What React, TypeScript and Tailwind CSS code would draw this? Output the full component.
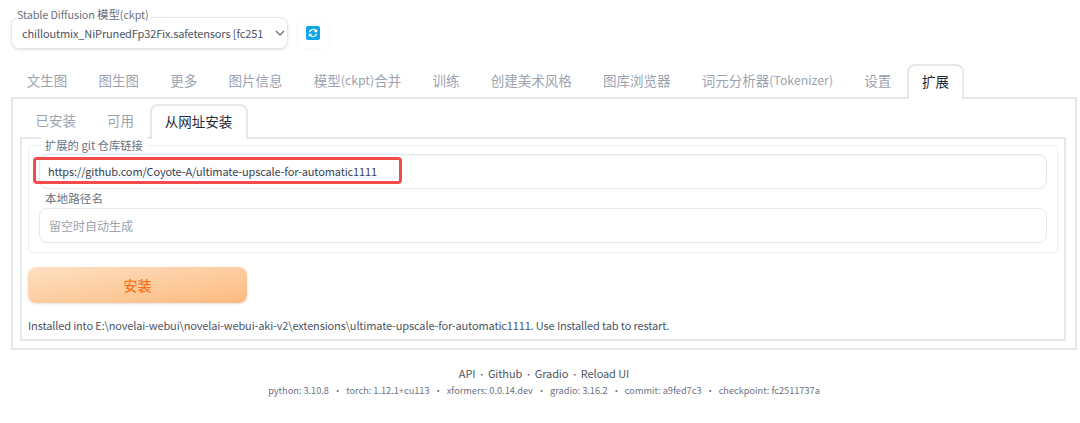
const subTabs = ["已安装", "可用"];
const fontStack = { fontFamily: '"Noto Sans CJK SC", "Noto Sans", sans-serif' };
const versions = ["python: 3.10.8", "torch: 1.12.1+cu113", "xformers: 0.0.14.dev", "gradio: 3.16.2", "commit: a9fed7c3", "checkpoint: fc2511737a"];
const links = ["API", "Github", "Gradio", "Reload UI"];

function Tab({ children }: { children: React.ReactNode }) {
  return <div className="flex h-[33px] items-center whitespace-nowrap px-[15.65px] pb-[1px] text-[13.5px] text-[#9ca3af]">{children}</div>;
}

function RefreshIcon() {
  return (
    <svg width="14" height="14" viewBox="0 0 14 14" className="block">
      <rect width="14" height="14" rx="2" fill="#0ea5e9" />
      <path d="M3.5 6.2A3.6 3.6 0 0 1 9.7 4.6L10.6 5.6M10.6 3.4V5.6H8.4" fill="none" stroke="#fff" strokeWidth="1.3" />
      <path d="M10.5 7.8A3.6 3.6 0 0 1 4.3 9.4L3.4 8.4M3.4 10.6V8.4H5.6" fill="none" stroke="#fff" strokeWidth="1.3" />
    </svg>
  );
}

export default function App() {
  return (
    <main style={fontStack} className="h-[423px] w-[1080px] overflow-hidden bg-white px-[11px] pt-[17px] text-[#374151]">
      <div className="flex gap-2">
        <div className="relative flex h-[32px] w-[277px] shrink-0 items-center justify-between rounded-lg border border-[#e5e7eb] pl-[10px] pr-[1px] shadow-sm">
          <span className="absolute left-[4px] top-[-12px] whitespace-nowrap bg-white px-[1px] text-[10.8px] leading-[16px] tracking-[-0.1px] text-[#6b7280]">Stable Diffusion <span className="text-[11.5px]">模型</span>(ckpt)</span>
          <span className="whitespace-nowrap text-[11px] tracking-[-0.13px] text-[#4b5563]">chilloutmix_NiPrunedFp32Fix.safetensors [fc251</span>
          <svg width="10" height="6" viewBox="0 0 10 6" className="mr-[1px]"><path d="M1 1l4 4 4-4" fill="none" stroke="#6b7280" strokeWidth="1.3" /></svg>
        </div>
        <div className="flex h-[32px] w-[34px] items-center justify-center rounded-md border border-[#fafafa]">
          <RefreshIcon />
        </div>
      </div>

      <div className="mt-[15px] flex h-[33px] items-end">
        <Tab>文生图</Tab>
        <Tab>图生图</Tab>
        <Tab>更多</Tab>
        <Tab>图片信息</Tab>
        <Tab>模型<span className="text-[12.3px]">(ckpt)</span>合并</Tab>
        <Tab>训练</Tab>
        <Tab>创建美术风格</Tab>
        <Tab>图库浏览器</Tab>
        <Tab>词元分析器<span className="text-[12.3px]">(Tokenizer)</span></Tab>
        <Tab>设置</Tab>
        <div className="relative z-10 mb-[-2px] flex h-[35px] w-[57px] items-center justify-center rounded-t-lg border-2 border-b-0 border-[#e5e7eb] bg-white pb-[2px] text-[13.5px] text-[#1f2937]">扩展</div>
      </div>

      <section className="h-[253px] w-[1066px] border-2 border-[#e5e7eb] px-[7px] pt-[5px]">
        <div className="flex h-[33px] items-end">
          {subTabs.map((t) => (
            <div key={t} className="flex h-[33px] items-center px-[15.5px] text-[13.5px] text-[#9ca3af]">{t}</div>
          ))}
          <div className="relative z-10 mb-[-2px] flex h-[35px] w-[98px] items-center justify-center rounded-t-lg border-2 border-b-0 border-[#e5e7eb] bg-white pb-[2px] text-[13.5px] text-[#1f2937]">从网址安装</div>
        </div>

        <div className="h-[204px] w-[1046px] border-2 border-[#e5e7eb] px-[6px] pt-[6px]">
          <div className="relative h-[108px] w-[1030px] rounded border border-[#eceef1] px-[10px] pt-[8px]">
            <span className="absolute left-[12px] top-[-9px] bg-white px-[4px] text-[11.3px] leading-[16px] text-[#6b7280]">扩展的 git 仓库链接</span>
            <div className="flex h-[35px] items-center rounded-lg border border-[#e5e7eb] pl-[8px] text-[11px] tracking-[-0.13px] text-[#374151] shadow-[inset_0_1px_2px_rgba(0,0,0,0.04)]">
              https://github.com/Coyote-A/ultimate-upscale-for-automatic1111
            </div>
            <div className="flex h-[19px] items-center pl-[6px] text-[11.6px] text-[#6b7280]">本地路径名</div>
            <div className="flex h-[35px] items-center rounded-lg border border-[#e5e7eb] pl-[9px] text-[12px] text-[#9ca3af]">
              留空时自动生成
            </div>
            <div className="absolute left-[4px] top-[11px] h-[27px] w-[369px] rounded-[4px] border-[3px] border-[#f24b4b]" />
          </div>

          <div className="mt-[14px] flex h-[36px] w-[219px] items-center justify-center rounded-lg bg-gradient-to-br from-[#fde0c2] to-[#fdba7f] text-[14px] font-medium text-[#f97316] shadow-sm">安装</div>
          <p className="mt-[14px] whitespace-nowrap text-[11px] leading-[16px] tracking-[-0.14px] text-[#4b5563]">
            Installed into E:\novelai-webui\novelai-webui-aki-v2\extensions\ultimate-upscale-for-automatic1111. Use Installed tab to restart.
          </p>
        </div>
      </section>

      <footer className="mt-[14px] w-[1066px] text-center">
        <div className="flex h-[18px] justify-center text-[11px] leading-[18px] tracking-[-0.1px] text-[#4b5563]">
          {links.map((l, i) => (
            <span key={l} className="flex items-center">
              {i > 0 && <span className="w-[12.5px] pt-[3px] text-center text-[8px] leading-[15px]">・</span>}
              {l}
            </span>
          ))}
        </div>
        <div className="flex justify-center gap-[4px] text-[9.2px] leading-[16px] text-[#6b7280]">
          {versions.map((v, i) => (
            <span key={v} className="flex gap-[4px]">
              {i > 0 && <span>•</span>}
              {v}
            </span>
          ))}
        </div>
      </footer>
    </main>
  );
}
